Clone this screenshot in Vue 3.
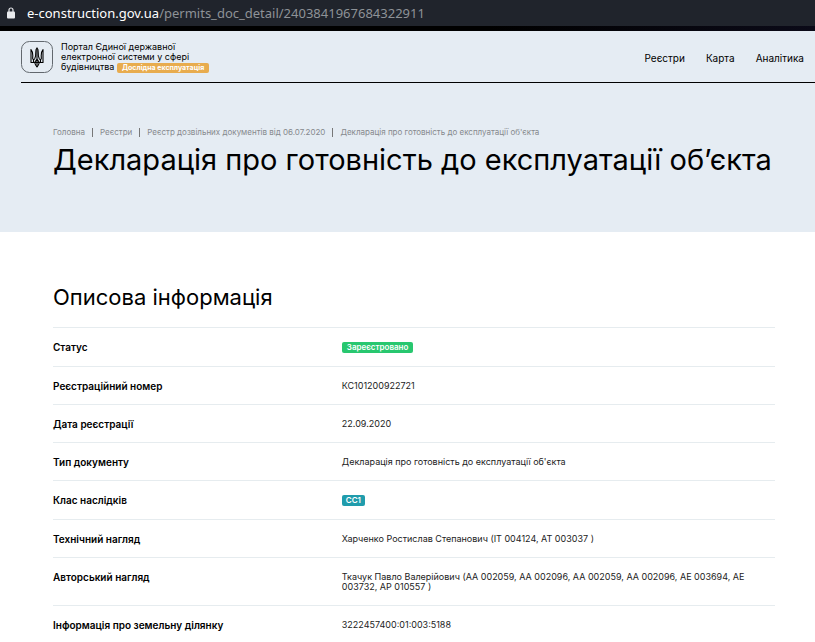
<script setup>
const nav = ['Реєстри', 'Карта', 'Аналітика']
const crumbs = ['Головна', 'Реєстри', 'Реєстр дозвільних документів від 06.07.2020']
const rows = [
  { label: 'Статус', value: 'Зареєстровано', badge: 'success' },
  { label: 'Реєстраційний номер', value: 'КС101200922721' },
  { label: 'Дата реєстрації', value: '22.09.2020' },
  { label: 'Тип документу', value: "Декларація про готовність до експлуатації об'єкта" },
  { label: 'Клас наслідків', value: 'СС1', badge: 'info' },
  { label: 'Технічний нагляд', value: 'Харченко Ростислав Степанович (ІТ 004124, АТ 003037 )' },
  {
    label: 'Авторський нагляд',
    value: 'Ткачук Павло Валерійович (АА 002059, АА 002096, АА 002059, АА 002096, АЕ 003694, АЕ 003732, АР 010557 )',
  },
  { label: 'Інформація про земельну ділянку', value: '3222457400:01:003:5188' },
]
</script>

<template>
  <div class="page">
    <div class="address">
      <svg class="lock" viewBox="0 0 8 12" aria-hidden="true">
        <path d="M2 5V3a2 2 0 0 1 4 0v2" fill="none" stroke="#e8eaed" stroke-width="1.2" />
        <rect y="4.6" width="8" height="6.9" rx="1" fill="#e8eaed" />
      </svg>
      <span class="host">e-construction.gov.ua</span><span>/permits_doc_detail/2403841967684322911</span>
    </div>
    <div class="strip"></div>
    <div class="hero">
      <header class="header">
        <a class="brand" href="#">
          <svg class="emblem" viewBox="0 0 32 32" aria-hidden="true">
            <rect x="0.5" y="0.5" width="31" height="31" rx="8" fill="none" stroke="#62686e" />
            <g fill="none" stroke="#000" stroke-width="1.1" stroke-linejoin="round">
              <path d="M10 8.500v13h3.700c.3 1.800 1.100 3 2.300 4.500 1.200-1.500 2-2.700 2.300-4.500H22v-13c-1.600 1.800-2 4-1.800 6.200.1 1.400.3 2.600 0 3.200-.5.700-1.300.7-1.800.1-1-1.800-1.300-4.500-1.200-6.700.1-2 0-3.300-1.200-4.500-1.200 1.200-1.300 2.500-1.200 4.500.1 2.200-.2 4.900-1.200 6.700-.5.600-1.300.6-1.800-.1-.3-.6-.1-1.800 0-3.200.2-2.200-.2-4.400-1.800-6.200z" />
              <path d="M16 8v18M12.500 18v3.500M19.500 18v3.500M13.700 21.500l2.300-3.500 2.300 3.500z" />
            </g>
          </svg>
          <span class="brand-text">
            Портал Єдиної державної<br />
            електронної системи у сфері<br />
            будівництва <span class="trial">Дослідна експлуатація</span>
          </span>
        </a>
        <nav class="nav">
          <a v-for="item in nav" :key="item" href="#">{{ item }}</a>
        </nav>
      </header>
      <div class="intro">
        <nav class="crumbs" aria-label="Навігація">
          <a v-for="item in crumbs" :key="item" href="#">{{ item }}</a>
          <span>Декларація про готовність до експлуатації об'єкта</span>
        </nav>
        <h1>Декларація про готовність до експлуатації об’єкта</h1>
      </div>
    </div>
    <main class="content">
      <h2>Описова інформація</h2>
      <dl>
        <div v-for="row in rows" :key="row.label" class="row">
          <dt>{{ row.label }}</dt>
          <dd>
            <span v-if="row.badge" class="badge" :class="row.badge">{{ row.value }}</span>
            <template v-else>{{ row.value }}</template>
          </dd>
        </div>
      </dl>
    </main>
  </div>
</template>

<style>
body {
  margin: 0;
  background: #fff;
  overflow: hidden;
}
</style>

<style scoped>
.page {
  font-family: Inter, sans-serif;
  color: #000;
}
a {
  color: inherit;
  text-decoration: none;
}
.address {
  display: flex;
  align-items: center;
  height: 26px;
  padding-left: 7px;
  background: #20242c;
  color: #8e9297;
  font: 13px/26px 'Noto Sans', sans-serif;
  white-space: nowrap;
}
.lock {
  width: 8px;
  height: 12px;
  margin-right: 12px;
}
.host {
  color: #fff;
}
.strip {
  height: 5px;
  background: linear-gradient(90deg, #000 60%, #0b0a18);
}
.hero {
  min-height: 201px;
  background: #e5ecf3;
}
.header {
  display: flex;
  align-items: center;
  justify-content: space-between;
  height: 51px;
  margin-left: 21px;
  padding-right: 11px;
  border-bottom: 1px solid #000;
}
.brand {
  display: flex;
  align-items: center;
  gap: 8px;
}
.emblem {
  width: 32px;
  height: 32px;
}
.brand-text {
  padding-top: 2px;
  font-size: 9px;
  line-height: 10px;
  white-space: nowrap;
}
.trial {
  display: inline-block;
  padding: 0 5px;
  border-radius: 2px;
  background: #e8ac4e;
  color: #fff;
  font-size: 7px;
  font-weight: 700;
}
.nav {
  display: flex;
  gap: 21px;
  padding-top: 2px;
  font-size: 10px;
}
.intro {
  padding: 44px 41px 0 53px;
}
.crumbs {
  display: flex;
  color: #85898d;
  font-size: 8px;
  line-height: 10px;
  white-space: nowrap;
}
.crumbs a::after {
  content: '';
  display: inline-block;
  width: 1px;
  height: 9px;
  margin: 0 7px;
  background: #777;
  vertical-align: middle;
}
h1 {
  margin: 5px 0 0;
  font-size: 29px;
  font-weight: 400;
  line-height: 36px;
  white-space: nowrap;
}
.content {
  padding: 52px 40px 0 53px;
}
h2 {
  margin: 0 0 17px;
  font-size: 22px;
  font-weight: 400;
  line-height: 26px;
}
dl {
  margin: 0;
}
.row {
  display: grid;
  grid-template-columns: 2fr 3fr;
  padding: 14px 0 13px;
  border-top: 1px solid #e6ecef;
  font-size: 9px;
  line-height: 10px;
}
dt {
  font-size: 10px;
  font-weight: 600;
}
dd {
  margin: 0;
  color: #222;
}
.badge {
  display: block;
  width: max-content;
  padding: 0 5px;
  border-radius: 2px;
  color: #fff;
  font-size: 8px;
  font-weight: 600;
  line-height: 11px;
}
.success {
  background: #28c76f;
}
.info {
  padding: 0 4px;
  background: #209cac;
}
</style>
